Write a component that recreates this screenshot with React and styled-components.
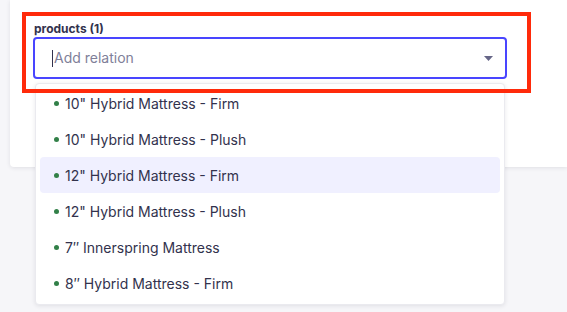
import React from "react";
import styled, { createGlobalStyle } from "styled-components";

const GlobalStyle = createGlobalStyle`
  body {
    margin: 0;
    background: #f6f6f9;
    font-family: Inter, "Noto Sans", sans-serif;
    -webkit-font-smoothing: antialiased;
  }
`;

const Page = styled.div`
  height: 312px;
  padding-left: 10px;
  overflow: hidden;
`;

const Card = styled.div`
  position: relative;
  height: 167px;
  box-sizing: border-box;
  padding: 21px 60px 0 23px;
  background: #ffffff;
  border-radius: 0 0 0 4px;
  box-shadow: 0 1px 4px rgba(33, 33, 52, 0.1);
`;

const Field = styled.div`
  position: relative;
  width: 474px;
`;

const Label = styled.label`
  display: block;
  font-size: 12px;
  font-weight: 700;
  line-height: 16px;
  color: #32324d;
  padding-left: 1px;
`;

const Control = styled.div`
  display: flex;
  align-items: center;
  height: 42px;
  box-sizing: border-box;
  padding: 0 12px 0 17px;
  border: 2px solid #4945ff;
  border-radius: 4px;
  background: #ffffff;
`;

const Cursor = styled.span`
  width: 1px;
  height: 17px;
  background: #32324d;
  margin-right: 1px;
`;

const Placeholder = styled.span`
  flex: 1;
  font-size: 14px;
  line-height: 20px;
  color: #808099;
`;

const Caret = styled.svg`
  display: block;
`;

const Menu = styled.ul`
  position: absolute;
  top: 62px;
  left: 2px;
  width: 470px;
  box-sizing: border-box;
  margin: 0;
  padding: 1px 4px 3px;
  list-style: none;
  background: #ffffff;
  border: 1px solid #eaeaef;
  border-radius: 4px;
  box-shadow: 0 1px 4px rgba(33, 33, 52, 0.1);
  z-index: 2;
`;

const Option = styled.li`
  display: flex;
  align-items: center;
  gap: 6px;
  height: 36px;
  padding-left: 14px;
  border-radius: 4px;
  font-size: 14px;
  color: #32324d;
  background: ${(p) => (p.active ? "#f0f0ff" : "transparent")};
`;

const Dot = styled.span`
  width: 5px;
  height: 5px;
  border-radius: 50%;
  background: #328048;
`;

const Highlight = styled.div`
  position: absolute;
  left: 12px;
  top: 12px;
  width: 509px;
  height: 81px;
  box-sizing: border-box;
  border: 4px solid #ff2a0a;
  pointer-events: none;
  z-index: 3;
`;

const options = [
  '10" Hybrid Mattress - Firm',
  '10" Hybrid Mattress - Plush',
  '12" Hybrid Mattress - Firm',
  '12" Hybrid Mattress - Plush',
  "7″ Innerspring Mattress",
  "8″ Hybrid Mattress - Firm",
];

export default function App() {
  return (
    <>
      <GlobalStyle />
      <Page>
        <Card>
          <Field>
            <Label>products (1)</Label>
            <Control>
              <Cursor />
              <Placeholder>Add relation</Placeholder>
              <Caret width="9" height="5" viewBox="0 0 9 5">
                <path d="M0 0h9L4.5 5z" fill="#666687" />
              </Caret>
            </Control>
            <Menu>
              {options.map((o, i) => (
                <Option key={o} active={i === 2}>
                  <Dot />
                  {o}
                </Option>
              ))}
            </Menu>
          </Field>
          <Highlight />
        </Card>
      </Page>
    </>
  );
}
